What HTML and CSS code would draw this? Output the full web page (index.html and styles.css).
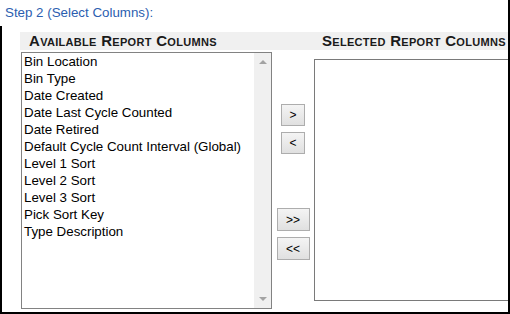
FILE: index.html
```html
<!DOCTYPE html>
<html lang="en">
    <head>
        <meta charset="utf-8">
        <title>Report Columns</title>
        <link rel="stylesheet" href="styles.css">
    </head>
    <body>
        <div class="page">
            <p class="stepTitle">Step 2 (Select Columns):</p>
            <div class="panel">
                <div class="headRow">
                    <div class="colHead availHead">Available Report Columns</div>
                    <div class="colHead midHead"></div>
                    <div class="colHead selHead">Selected Report Columns</div>
                </div>
                <div class="listRow">
                    <div class="listBox availBox">
                        <ul class="items">
                            <li>Bin Location</li>
                            <li>Bin Type</li>
                            <li>Date Created</li>
                            <li>Date Last Cycle Counted</li>
                            <li>Date Retired</li>
                            <li>Default Cycle Count Interval (Global)</li>
                            <li>Level 1 Sort</li>
                            <li>Level 2 Sort</li>
                            <li>Level 3 Sort</li>
                            <li>Pick Sort Key</li>
                            <li>Type Description</li>
                        </ul>
                        <div class="scrollBar">
                            <span class="arrowUp"></span>
                            <span class="arrowDown"></span>
                        </div>
                    </div>
                    <div class="movers">
                        <button type="button" class="moveBtn single addOne">&gt;</button>
                        <button type="button" class="moveBtn single">&lt;</button>
                        <button type="button" class="moveBtn double addAll">&gt;&gt;</button>
                        <button type="button" class="moveBtn double">&lt;&lt;</button>
                    </div>
                    <div class="listBox selBox"></div>
                </div>
            </div>
        </div>
    </body>
</html>
```

FILE: styles.css
```css
* {
    box-sizing: border-box;
}
body {
    margin: 0;
    font-family: "Liberation Sans", Arial, sans-serif;
    background: white;
}
.page {
    width: 510px;
    height: 314px;
    border-right: 2px solid #000;
    overflow: hidden;
}
.stepTitle {
    margin: 0;
    padding: 5px 0 0 5px;
    height: 26px;
    font-size: 13.33px;
    line-height: 16px;
    color: #2b5eb0;
}
.panel {
    height: 288px;
    border-left: 2px solid #000;
    border-bottom: 2px solid #000;
    padding-top: 6px;
    overflow: hidden;
}
.headRow {
    display: flex;
    margin-left: 18px;
    height: 18px;
    background-color: #f0f0f0;
}
.colHead {
    flex-shrink: 0;
    font-size: 15px;
    font-weight: bold;
    font-variant: small-caps;
    letter-spacing: 0.3px;
    line-height: 18px;
    color: #1a1a1a;
    white-space: nowrap;
    padding-left: 9px;
}
.availHead {
    width: 251px;
}
.midHead {
    width: 42px;
    padding: 0;
}
.selHead {
    width: 196px;
}
.listRow {
    display: flex;
    align-items: flex-start;
    margin-top: 2px;
    padding-left: 19px;
}
.listBox {
    flex-shrink: 0;
    border: 1px solid #828282;
    background: white;
}
.availBox {
    width: 251px;
    height: 257px;
    display: flex;
}
.items {
    flex: 1;
    margin: 0;
    padding: 0 0 0 2px;
    list-style: none;
    font-size: 13.33px;
    line-height: 17px;
    color: #000;
}
.scrollBar {
    width: 17px;
    background-color: #f0f0f0;
    display: flex;
    flex-direction: column;
    align-items: center;
    justify-content: space-between;
    padding: 7px 0 7px 0;
}
.arrowUp {
    width: 0;
    height: 0;
    border-left: 4px solid transparent;
    border-right: 4px solid transparent;
    border-bottom: 4px solid #a3a3a3;
}
.arrowDown {
    width: 0;
    height: 0;
    border-left: 4px solid transparent;
    border-right: 4px solid transparent;
    border-top: 4px solid #a3a3a3;
}
.movers {
    flex-shrink: 0;
    width: 42px;
    display: flex;
    flex-direction: column;
    align-items: center;
}
.moveBtn {
    font-family: "Liberation Sans", Arial, sans-serif;
    font-size: 12px;
    color: #000;
    padding: 0;
    border: 1px solid #adadad;
    border-radius: 0;
    background: linear-gradient(#f4f4f4, #e0e0e0);
    margin-top: 6px;
}
.single {
    width: 24px;
    height: 22px;
}
.double {
    width: 33px;
    height: 23px;
}
.addOne {
    margin-top: 52px;
}
.addAll {
    margin-top: 54px;
}
.selBox {
    width: 220px;
    height: 242px;
    margin-top: 7px;
    border-color: #7a7a7a;
}
```
